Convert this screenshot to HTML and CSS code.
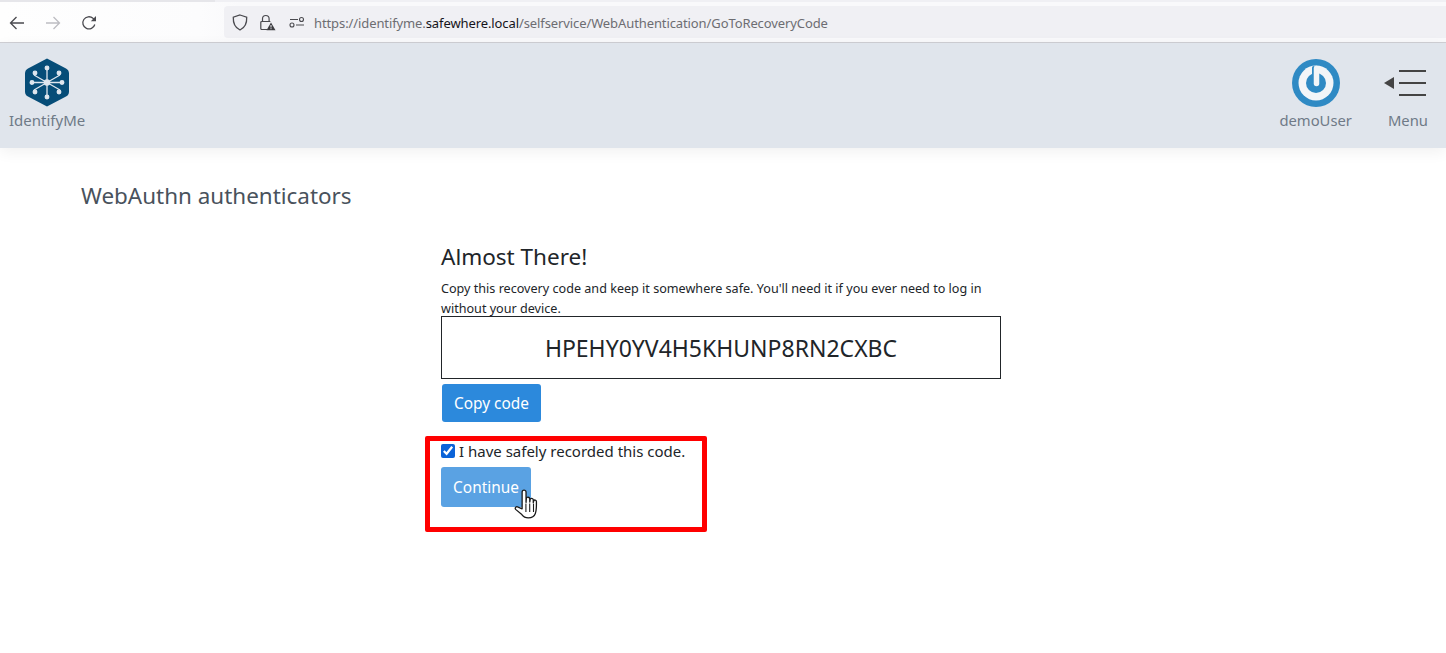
FILE: index.html
```html
<!DOCTYPE html>
<html lang="en">
<head>
<meta charset="utf-8">
<title>WebAuthn authenticators</title>
<link rel="stylesheet" href="styles.css">
</head>
<body>
<div class="tabstrip"><div class="tabedge"></div></div>
<div class="toolbar">
  <svg class="nav back" width="16" height="16" viewBox="0 0 16 16"><path d="M15 8H1.500M7.500 2L1.500 8l6 6" fill="none" stroke="#4a4a4f" stroke-width="1.300"/></svg>
  <svg class="nav fwd" width="16" height="16" viewBox="0 0 16 16"><path d="M1 8h13.500M8.500 2l6 6-6 6" fill="none" stroke="#bdbdc2" stroke-width="1.300"/></svg>
  <svg class="nav reload" width="16" height="16" viewBox="0 0 16 16"><path d="M13.800 9.500A6.100 6.100 0 1 1 12 3.300L14 5" fill="none" stroke="#4a4a4f" stroke-width="1.300"/><path d="M15 1v5.200H9.800z" fill="#4a4a4f"/></svg>
  <div class="urlbar">
    <svg class="shield" width="16" height="17" viewBox="0 0 16 17"><path d="M8 1L14.700 3.200C15 9 13 13.600 8 16 3 13.600 1 9 1.300 3.200z" fill="none" stroke="#4a4a4f" stroke-width="1.300"/></svg>
    <svg class="lock" width="17" height="17" viewBox="0 0 17 17"><path d="M3.500 7.500V4.800a3.300 3.300 0 0 1 6.600 0v2.700M8 15.500H2.800a1 1 0 0 1-1-1V8.500a1 1 0 0 1 1-1h8.600" fill="none" stroke="#4a4a4f" stroke-width="1.200"/><path d="M12 8.500l4.500 7.800h-9z" fill="#3c3c40"/><path d="M12 11v2.500M12 14.200v1" stroke="#f0f0f4" stroke-width="1"/></svg>
    <svg class="perm" width="16" height="12" viewBox="0 0 16 12"><path d="M1 3.500h8M7 9h8" fill="none" stroke="#4a4a4f" stroke-width="1.100"/><circle cx="12.500" cy="3.500" r="2" fill="none" stroke="#4a4a4f" stroke-width="1.100"/><circle cx="3" cy="9" r="2" fill="none" stroke="#4a4a4f" stroke-width="1.100"/></svg>
    <span class="url">https://identifyme.<b class="domain">safewhere.local</b>/selfservice/WebAuthentication/GoToRecoveryCode</span>
  </div>
</div>
<header class="apphead">
  <a class="brand">
    <svg width="46" height="49" viewBox="0 0 46 49">
      <path d="M23 0.500L42 10.500Q45 12 45 15.500V33.500Q45 37 42 38.500L23 48.500 4 38.500Q1 37 1 33.500V15.500Q1 12 4 10.500z" fill="#064d78"/>
      <g stroke="#dfe6ee" stroke-width="1.300" fill="#dfe6ee">
        <path d="M23 24.500V9.500M23 24.500V39.500M23 24.500L10 17M23 24.500L36 17M23 24.500L10 32M23 24.500L36 32M23 24.500H8.500M23 24.500H37.500" fill="none"/>
        <circle cx="23" cy="10" r="1.800"/><circle cx="23" cy="39" r="1.800"/>
        <circle cx="11" cy="15" r="1.800"/><circle cx="35" cy="15" r="1.800"/>
        <circle cx="11" cy="34" r="1.800"/><circle cx="35" cy="34" r="1.800"/>
        <circle cx="8" cy="24.500" r="1.800"/><circle cx="38" cy="24.500" r="1.800"/>
        <circle cx="23" cy="24.500" r="2.600"/>
      </g>
    </svg>
    <span class="headlabel">IdentifyMe</span>
  </a>
  <div class="headright">
    <a class="user">
      <svg width="48" height="48" viewBox="0 0 48 48">
        <circle cx="24" cy="24" r="24" fill="#2f8ac4"/>
        <circle cx="24" cy="24" r="17.500" fill="#f2f5f8"/>
        <circle cx="24" cy="24" r="10" fill="#2f8ac4"/>
        <path d="M21.500 8.500v16" stroke="#2f8ac4" stroke-width="3" stroke-linecap="round"/>
        <path d="M24.500 9.500v15" stroke="#f2f5f8" stroke-width="5.500" stroke-linecap="round"/>
      </svg>
      <span class="headlabel">demoUser</span>
    </a>
    <a class="menu">
      <svg width="43" height="28" viewBox="0 0 43 28">
        <path d="M1 14L11 8V20z" fill="#444"/>
        <path d="M16 2h27M16 14h27M16 26h27" stroke="#444" stroke-width="2"/>
      </svg>
      <span class="headlabel">Menu</span>
    </a>
  </div>
</header>
<main class="page">
  <h1 class="pagetitle">WebAuthn authenticators</h1>
  <section class="panel">
    <h2 class="paneltitle">Almost There!</h2>
    <p class="intro">Copy this recovery code and keep it somewhere safe. You'll need it if you ever need to log in without your device.</p>
    <div class="codebox">HPEHY0YV4H5KHUNP8RN2CXBC</div>
    <button class="btn copy" type="button">Copy code</button>
    <label class="confirm"><input class="check" type="checkbox" checked>I have safely recorded this code.</label>
    <button class="btn cont" type="button">Continue</button>
    <div class="highlight"></div>
    <svg class="pointer" width="26" height="35" viewBox="0 0 24 32">
      <path d="M7.500 20V4.500a1.800 1.800 0 0 1 3.600 0V14l.3-3.500c.2-1.700 3-1.600 3.100.2l.1 3 .3-2.400c.3-1.500 2.800-1.300 2.900.4v2.600l.4-1.600c.4-1.300 2.500-1 2.500.6 0 4.500.2 8-1 11-1 2.800-3 4-6.500 4-3 0-4.700-1.200-6-3L1.500 20.500c-1-1.300.6-3.300 2.300-2.100z" fill="#fff" stroke="#1a1a1a" stroke-width="1.200" stroke-linejoin="round"/>
      <path d="M11 15v8M14.500 15v8M18 15v8" stroke="#1a1a1a" stroke-width="1"/>
    </svg>
  </section>
</main>
</body>
</html>
```
FILE: styles.css
```css
* { box-sizing: border-box; }
html, body { margin: 0; padding: 0; }
body {
  height: 653px;
  overflow: hidden;
  background: #fff;
  font-family: "Noto Sans", "Open Sans", sans-serif;
  color: #212529;
}
.tabstrip { height: 2px; background: #f0f0f4; }
.tabedge { width: 215px; height: 2px; background: #e6e6ea; }
.toolbar {
  height: 41px;
  border-bottom: 1px solid #cfcfd4;
  display: flex;
  align-items: center;
  background: linear-gradient(to right, #fefefe 0, #fcfcfd 200px, #f9f9fb 240px);
}
.nav { flex: none; margin-top: 1px; }
.back { margin-left: 9px; }
.fwd { margin-left: 20px; }
.reload { margin-left: 20px; }
.urlbar {
  margin-left: 127px;
  flex: 1;
  height: 32px;
  background: #f0f0f4;
  border-radius: 4px 0 0 4px;
  display: flex;
  align-items: center;
  padding-left: 8px;
}
.lock { margin-left: 11px; }
.perm { margin-left: 13px; }
.url {
  margin-left: 9px;
  padding-top: 2px;
  font-size: 13px;
  color: #6d6d72;
  white-space: nowrap;
  letter-spacing: -0.1px;
}
.domain { font-weight: 400; color: #15141a; }
.apphead {
  height: 105px;
  background: #e0e5ec;
  display: flex;
  justify-content: space-between;
  box-shadow: 0 4px 14px rgba(0, 0, 0, 0.06);
  padding: 15px 18px 0 9px;
  position: relative;
}
.brand, .user {
  display: flex;
  flex-direction: column;
  align-items: center;
}
.menu {
  display: flex;
  flex-direction: column;
  align-items: flex-end;
}
.headlabel {
  font-size: 15px;
  line-height: 20px;
  color: #6f7a87;
  margin-top: 3px;
}
.headright { display: flex; gap: 31px; }
.user svg { margin-top: 1px; }
.user .headlabel { margin-top: 3px; font-size: 14.8px; }
.menu svg { margin: 11px 2px 0 0; }
.menu .headlabel { margin-top: 13px; font-size: 14.8px; }
.page { position: relative; }
.pagetitle {
  margin: 0;
  padding: 33px 0 0 81px;
  font-size: 22.45px;
  font-weight: 400;
  line-height: 30px;
  color: #49525c;
}
.panel {
  position: relative;
  margin: 30px 0 0 441px;
  width: 560px;
}
.paneltitle {
  margin: 0;
  font-size: 22.5px;
  font-weight: 400;
  line-height: 32px;
  color: #212529;
}
.intro {
  margin: 6px 0 0;
  font-size: 12.6px;
  line-height: 20px;
  color: #212529;
}
.codebox {
  height: 63px;
  margin-top: -3px;
  border: 1px solid #212529;
  display: flex;
  align-items: center;
  justify-content: center;
  font-size: 23px;
  color: #212529;
}
.btn {
  display: block;
  border: 0;
  border-radius: 3px;
  color: #fff;
  font: inherit;
  font-size: 15.4px;
}
.copy {
  margin: 5px 0 0 1px;
  width: 99px;
  height: 38px;
  background: #2c89dc;
}
.confirm {
  display: flex;
  align-items: center;
  margin-top: 17px;
  height: 24px;
  font-size: 15px;
  color: #212529;
}
.check {
  width: 14px;
  height: 14px;
  margin: 0 4px 0 0;
  accent-color: #0b63d8;
}
.cont {
  margin-top: 4px;
  width: 90px;
  height: 40px;
  background: #5aa2e3;
}
.highlight {
  position: absolute;
  left: -16px;
  top: 195px;
  width: 282px;
  height: 96px;
  border: 5px solid #f00;
  border-radius: 2px;
}
.pointer {
  position: absolute;
  left: 73px;
  top: 246px;
}
```
